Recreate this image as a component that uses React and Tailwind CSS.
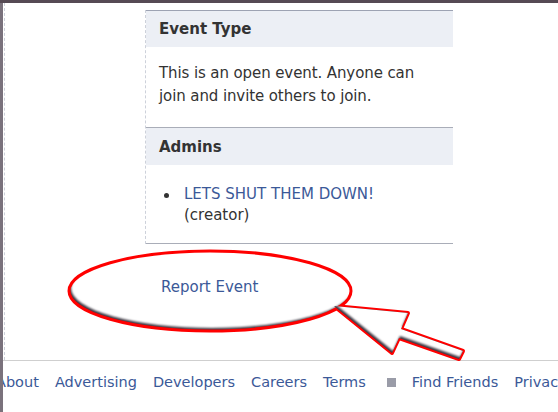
export default function App() {
  const arrow = "334,306 408,313 401,329 463,351 459,359 399,338 392,353";
  const links = ["About", "Advertising", "Developers", "Careers", "Terms"];

  return (
    <div className="w-[558px] h-[412px] relative overflow-hidden bg-white text-[#333] font-['DejaVu_Sans',sans-serif]">
      {/* annotation: circled link with arrow */}
      <svg className="absolute left-0 top-0 pointer-events-none" width="558" height="412">
        <defs>
          <clipPath id="ec">
            <ellipse cx="210" cy="291" rx="141" ry="40" />
          </clipPath>
          <clipPath id="ac">
            <polygon points={arrow} />
          </clipPath>
          <filter id="bl" x="-20%" y="-20%" width="140%" height="140%">
            <feGaussianBlur stdDeviation="1.3" />
          </filter>
        </defs>
        <polygon points={arrow} fill="none" stroke="#ff0000" strokeWidth="4" strokeLinejoin="round" />
        <g clipPath="url(#ec)">
          <rect x="0" y="0" width="558" height="412" fill="#3a3540" />
          <ellipse cx="212" cy="288" rx="141" ry="40" fill="#fff" filter="url(#bl)" />
        </g>
        <ellipse cx="210" cy="291" rx="141" ry="40" fill="none" stroke="#ff0000" strokeWidth="3" />
        <g clipPath="url(#ac)">
          <rect x="0" y="0" width="558" height="412" fill="#3a3540" />
          <polygon points={arrow} transform="translate(1,-2)" fill="#fff" filter="url(#bl)" />
        </g>
      </svg>

      <div className="h-[3px] bg-[#564a54]" />
      <div className="flex h-[409px]">
        <div className="w-[3px] bg-[#7a727c] relative z-10" />
        <div className="flex-1 flex flex-col min-w-0">
          <div className="flex h-[358px] border-b border-[#cfcfcf]">
            <div className="w-[141px] ml-px border-l border-dashed border-[#cdd1da]" />
            <div className="w-[308px] flex flex-col">
              <div className="h-[7px]" />
              <div className="border-l border-dashed border-[#cdd1da]">
                <div className="h-[37px] flex items-center px-[13px] pt-px bg-[#eceff5] border-t border-[#9da3b3] font-bold text-[15px]">
                  Event Type
                </div>
                <div className="px-[13px] pt-[15px] pb-[19px] text-[15px] leading-[23px] tracking-[-0.1px]">
                  This is an open event. Anyone can join and invite others to join.
                </div>
                <div className="h-[38px] flex items-center px-[13px] pt-px bg-[#eceff5] border-t border-[#a9adb8] font-bold text-[15px]">
                  Admins
                </div>
                <div className="flex pt-[19px] pb-[17px] text-[15px] leading-[21px] border-b border-[#a9adb8]">
                  <div className="w-[38px] flex justify-center pl-[2px] pt-[9px]">
                    <div className="w-[5px] h-[5px] rounded-full bg-[#333]" />
                  </div>
                  <div>
                    <div className="text-[#3b5998]">LETS SHUT THEM DOWN!</div>
                    <div>(creator)</div>
                  </div>
                </div>
              </div>
              <div className="relative z-10 pl-[16px] pt-[32px] text-[15px] leading-[22px] text-[#3b5998]">
                Report Event
              </div>
            </div>
          </div>
          <div className="flex items-center gap-[16px] ml-[-7px] pt-[10px] text-[14.5px] leading-[22px] text-[#3b5998] whitespace-nowrap">
            {links.map((l) => (
              <span key={l}>{l}</span>
            ))}
            <span className="w-[9px] h-[9px] ml-[5px] shrink-0 bg-[#9a9ca8]" />
            <span>Find Friends</span>
            <span>Privacy</span>
          </div>
        </div>
      </div>
    </div>
  );
}
